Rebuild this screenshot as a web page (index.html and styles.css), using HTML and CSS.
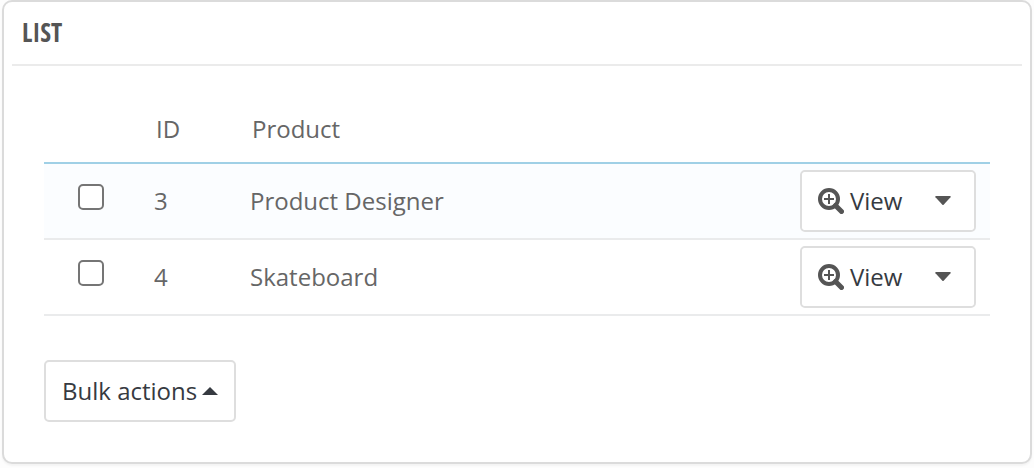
FILE: index.html
```html
<!DOCTYPE html>
<html lang="en">
<head>
<meta charset="utf-8">
<meta name="viewport" content="width=device-width, initial-scale=1">
<title>List</title>
<link rel="stylesheet" href="styles.css">
</head>
<body>
<svg class="sprite" aria-hidden="true">
  <symbol id="zoom-in" viewBox="0 0 26 26">
    <circle cx="11" cy="11" r="9" fill="none" stroke="currentColor" stroke-width="4"/>
    <path d="M11 6v10M6 11h10" fill="none" stroke="currentColor" stroke-width="2"/>
    <path d="M17.500 17.500L23.500 23.500" fill="none" stroke="currentColor" stroke-width="5" stroke-linecap="round"/>
  </symbol>
  <symbol id="caret-down" viewBox="0 0 16 10">
    <path d="M1 0h14q1.200.200.500 1.200L8.600 8.700q-.600.500-1.200 0L.500 1.200Q-.200.200 1 0z" fill="currentColor"/>
  </symbol>
  <symbol id="caret-up" viewBox="0 0 16 8">
    <path d="M0 8L8 0l8 8z" fill="currentColor"/>
  </symbol>
</svg>
<main class="panel">
  <h1 class="panel-heading">LIST</h1>
  <div class="panel-body">
    <table class="list">
      <thead>
        <tr>
          <th class="col-check"></th>
          <th class="col-id" scope="col">ID</th>
          <th scope="col">Product</th>
          <th class="col-actions"></th>
        </tr>
      </thead>
      <tbody>
        <tr>
          <td class="col-check"><input class="check" type="checkbox" aria-label="Select Product Designer"></td>
          <td class="col-id">3</td>
          <td>Product Designer</td>
          <td class="col-actions">
            <div class="split">
              <button class="split-main" type="button"><svg class="icon-zoom" aria-hidden="true"><use href="#zoom-in"/></svg>View</button>
              <button class="split-toggle" type="button" aria-label="More actions"><svg class="icon-down" aria-hidden="true"><use href="#caret-down"/></svg></button>
            </div>
          </td>
        </tr>
        <tr>
          <td class="col-check"><input class="check" type="checkbox" aria-label="Select Skateboard"></td>
          <td class="col-id">4</td>
          <td>Skateboard</td>
          <td class="col-actions">
            <div class="split">
              <button class="split-main" type="button"><svg class="icon-zoom" aria-hidden="true"><use href="#zoom-in"/></svg>View</button>
              <button class="split-toggle" type="button" aria-label="More actions"><svg class="icon-down" aria-hidden="true"><use href="#caret-down"/></svg></button>
            </div>
          </td>
        </tr>
      </tbody>
    </table>
    <button class="bulk" type="button">Bulk actions<svg class="icon-up" aria-hidden="true"><use href="#caret-up"/></svg></button>
  </div>
</main>
</body>
</html>
```

FILE: styles.css
```css
* {
  box-sizing: border-box;
}

body {
  margin: 0;
  padding: 0 2px 4px;
  background: #fdfdfd;
  color: #666;
  font-family: "Open Sans", "Noto Sans", sans-serif;
  font-size: 24px;
  line-height: 32px;
}

.sprite {
  display: none;
}

.panel {
  padding: 0 8px 40px;
  border: 2px solid #dbdbdb;
  border-radius: 10px;
  background: #fff;
  box-shadow: 0 2px 2px rgba(0, 0, 0, 0.04);
}

.panel-heading {
  margin: 0;
  padding: 14px 10px 16px;
  border-bottom: 2px solid #ebebeb;
  color: #555;
  font-family: "Ubuntu Condensed", "Liberation Sans Narrow", "Open Sans Condensed", sans-serif;
  font-size: 26px;
  font-weight: 400;
}

.panel-body {
  padding: 32px 32px 0;
}

.list {
  width: 100%;
  border-collapse: separate;
  border-spacing: 0;
}

.list th {
  padding: 15px 4px 17px;
  border-bottom: 2px solid #a0d0e6;
  font-weight: 400;
  text-align: left;
}

.list td {
  padding: 6px 2px;
  border-bottom: 2px solid #eaebec;
}

.list tbody tr:first-child {
  background: #fbfdff;
}

.list .col-check {
  width: 108px;
  padding-left: 34px;
}

.list .col-id {
  width: 96px;
}

.list .col-actions {
  width: 190px;
  padding-left: 0;
  padding-right: 14px;
}

.check {
  display: block;
  width: 26px;
  height: 26px;
  margin: 0 0 8px;
  border: 2px solid #757575;
  border-radius: 5px;
  background: #fff;
  appearance: none;
}

.check:checked {
  background: #757575;
}

.split {
  display: flex;
  border: 2px solid #dedede;
  border-radius: 5px;
  background: #fff;
}

.split-main,
.split-toggle,
.bulk {
  display: flex;
  align-items: center;
  background: #fff;
  color: #363a41;
  font: inherit;
  cursor: pointer;
}

.split-main,
.split-toggle {
  padding: 13px 16px;
  border: 0;
  border-radius: 4px;
}

.split-main {
  flex: 1;
  gap: 6px;
}

.split-toggle {
  padding: 13px 23px 13px 16px;
}

.icon-zoom {
  width: 26px;
  height: 26px;
  color: #555;
}

.icon-down {
  width: 16px;
  height: 10px;
  color: #555;
}

.icon-up {
  width: 16px;
  height: 8px;
}

.bulk {
  gap: 5px;
  margin-top: 44px;
  padding: 13px 16px;
  border: 2px solid #dedede;
  border-radius: 5px;
}
```
